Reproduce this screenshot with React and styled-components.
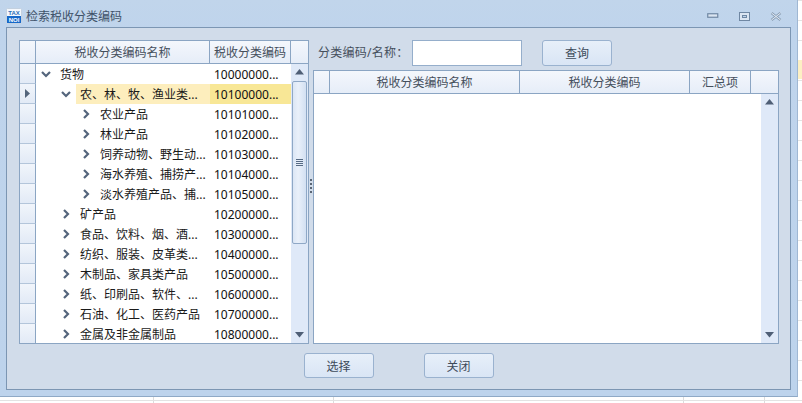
import React from 'react';
import styled, { createGlobalStyle } from 'styled-components';

const GlobalStyle = createGlobalStyle`
    html, body {
        margin: 0;
        padding: 0;
        overflow: hidden;
    }
    body {
        font-family: "Noto Sans", "Noto Sans CJK SC", sans-serif;
        font-size: 12px;
    }
`;

const Sheet = styled.div`
    width: 802px;
    height: 403px;
    overflow: hidden;
    background-color: #fff;
    background-image:
        linear-gradient(#fdf0c4, #fdf0c4),
        repeating-linear-gradient(to bottom, #e3e3e3 0, #e3e3e3 1px, transparent 1px, transparent 20px),
        linear-gradient(to right, #dcdcdc, #dcdcdc),
        linear-gradient(to right, #dcdcdc, #dcdcdc),
        linear-gradient(to right, #dcdcdc, #dcdcdc),
        linear-gradient(to right, #dcdcdc, #dcdcdc);
    background-size: 4px 19px, 100% 20px, 1px 7px, 1px 7px, 1px 7px, 1px 7px;
    background-position: 798px 60px, 0 0, 153px 396px, 333px 396px, 683px 396px, 764px 396px;
    background-repeat: no-repeat, repeat, no-repeat, no-repeat, no-repeat, no-repeat;
`;

const Window = styled.div`
    box-sizing: border-box;
    width: 798px;
    height: 397px;
    display: flex;
    flex-direction: column;
    padding: 0 6px 6px;
    background: linear-gradient(to bottom, #c1d5eb 0, #bfd4ec 30px, #bdd3ec 100%);
    border-right: 1px solid #9fb7d3;
    border-bottom: 1px solid #8fa9c6;
`;

const TitleBar = styled.div`
    height: 27px;
    flex: none;
    display: flex;
    align-items: center;
    padding-top: 5px;
    box-sizing: border-box;
`;

const TitleText = styled.span`
    margin-left: 4px;
    color: #3f5269;
    font-size: 12px;
`;

const WindowButtons = styled.div`
    margin-left: auto;
    display: flex;
    align-items: center;
    gap: 20px;
    margin-right: 9px;
`;

const Panel = styled.div`
    flex: 1;
    box-sizing: border-box;
    display: flex;
    flex-direction: column;
    padding: 12px 12px 0;
    background: #d1dcea;
    border: 1px solid #7c96b3;
`;

const Main = styled.div`
    height: 304px;
    flex: none;
    display: flex;
`;

const Grid = styled.div`
    box-sizing: border-box;
    display: flex;
    flex-direction: column;
    overflow: hidden;
    background: #fff;
    border: 1px solid #8ba5c3;
    width: ${p => p.$width}px;
    height: ${p => p.$height}px;
`;

const HeaderRow = styled.div`
    flex: none;
    height: 23px;
    box-sizing: border-box;
    display: flex;
    border-bottom: 1px solid #8ba5c3;
    background: linear-gradient(to bottom, #f4f7fc, #e6edf8);
`;

const HeaderCell = styled.div`
    box-sizing: border-box;
    width: ${p => p.$width}px;
    flex: ${p => (p.$width ? 'none' : 1)};
    display: flex;
    align-items: center;
    justify-content: center;
    color: #454f5c;
    white-space: nowrap;
    border-right: ${p => (p.$last ? 'none' : '1px solid #8ba5c3')};
`;

const GridBody = styled.div`
    flex: 1;
    min-height: 0;
    display: flex;
`;

const Rows = styled.div`
    flex: 1;
    min-width: 0;
    overflow: hidden;
`;

const Row = styled.div`
    height: 20px;
    display: flex;
`;

const Indicator = styled.div`
    box-sizing: border-box;
    width: 16px;
    flex: none;
    display: flex;
    align-items: center;
    justify-content: center;
    border-right: 1px solid #8ba5c3;
    border-bottom: 1px solid #b3c5da;
    background: linear-gradient(to bottom, #f1f5fb, #e2eaf6);
`;

const NameCell = styled.div`
    width: 174px;
    flex: none;
    box-sizing: border-box;
    display: flex;
    align-items: center;
    padding-left: ${p => 3 + p.$level * 20}px;
    white-space: nowrap;
    color: #1a1a1a;
`;

const Expander = styled.span`
    width: 14px;
    height: 20px;
    flex: none;
    display: flex;
    align-items: center;
    justify-content: center;
`;

const NameText = styled.span`
    height: 20px;
    line-height: 22px;
    flex: 1;
    margin-left: 3px;
    padding-left: 4px;
    background: ${p => (p.$selected ? '#fdeebd' : 'transparent')};
`;

const CodeCell = styled.div`
    width: 81px;
    height: 20px;
    flex: none;
    box-sizing: border-box;
    line-height: 22px;
    padding-left: 4px;
    white-space: nowrap;
    color: #111;
    background: ${p => (p.$selected ? '#f8e796' : 'transparent')};
`;

const ScrollBar = styled.div`
    width: 17px;
    flex: none;
    display: flex;
    flex-direction: column;
    align-items: center;
    background: #dfe9f8;
`;

const ArrowBox = styled.div`
    height: 16px;
    flex: none;
    display: flex;
    align-items: center;
    justify-content: center;
    margin-top: ${p => (p.$bottom ? 'auto' : '0')};
`;

const Thumb = styled.div`
    box-sizing: border-box;
    width: 15px;
    height: 163px;
    margin-top: 1px;
    display: flex;
    align-items: center;
    justify-content: center;
    border: 1px solid #8fa8c6;
    border-radius: 2px;
    background: linear-gradient(to right, #dbe6f5, #e9f0fa 40%, #d3e0f2);
`;

const Grip = styled.div`
    width: 7px;
    height: 7px;
    background: repeating-linear-gradient(to bottom, #566a84 0, #566a84 1px, transparent 1px, transparent 2px);
`;

const Splitter = styled.div`
    width: 4px;
    flex: none;
    display: flex;
    flex-direction: column;
    align-items: center;
    justify-content: center;
    gap: 2px;
    padding-bottom: 13px;
    box-sizing: border-box;
`;

const Dot = styled.i`
    display: block;
    width: 2px;
    height: 2px;
    background: #5a6675;
`;

const RightSide = styled.div`
    flex: 1;
    min-width: 0;
    display: flex;
    flex-direction: column;
`;

const SearchBar = styled.div`
    height: 30px;
    flex: none;
    display: flex;
    align-items: flex-start;
`;

const SearchLabel = styled.label`
    width: 94px;
    margin-left: 5px;
    flex: none;
    height: 26px;
    line-height: 26px;
    letter-spacing: 0.25px;
    color: #454f5c;
    white-space: nowrap;
`;

const SearchInput = styled.input`
    box-sizing: border-box;
    width: 110px;
    height: 26px;
    padding: 0 4px;
    background: #fff;
    border: 1px solid #95aecb;
    outline: none;
`;

const Button = styled.button`
    box-sizing: border-box;
    width: 70px;
    height: ${p => p.$height || 25}px;
    padding: 0;
    margin-left: ${p => p.$offset || 0}px;
    font: inherit;
    color: #3d4a5a;
    border: 1px solid #9ab2cf;
    border-radius: 3px;
    background: linear-gradient(to bottom, #e7eff9, #d9e5f5);
`;

const Footer = styled.div`
    flex: none;
    display: flex;
    justify-content: center;
    gap: 50px;
    margin-top: 9px;
`;

const EmptyBody = styled.div`
    flex: 1;
`;

function Chevron({ open }) {
    return (
        <svg width="10" height="10" viewBox="0 0 10 10">
            <path
                d={open ? 'M1 3 L5 7 L9 3' : 'M3 1 L7 5 L3 9'}
                fill="none"
                stroke="#54657c"
                strokeWidth="2.2"
            />
        </svg>
    );
}

function Arrow({ down }) {
    return (
        <svg width="9" height="6" viewBox="0 0 9 6">
            <path d={down ? 'M0 0 H9 L4.5 5.5 Z' : 'M0 5.5 H9 L4.5 0 Z'} fill="#4f5f76" />
        </svg>
    );
}

function RowMarker() {
    return (
        <svg width="5" height="9" viewBox="0 0 5 9">
            <path d="M0 0 L5 4.5 L0 9 Z" fill="#54657c" />
        </svg>
    );
}

function TaxIcon() {
    return (
        <svg width="16" height="16" viewBox="0 0 16 16">
            <rect x="0.5" y="0.5" width="15" height="15" rx="1" fill="#f4f8fd" stroke="#c3d0df" />
            <rect x="1" y="8" width="14" height="7" fill="#1668c9" />
            <text x="8" y="6.6" textAnchor="middle" fontSize="6" fontWeight="700" fill="#2a6bb8" fontFamily="Liberation Sans">TAX</text>
            <text x="8" y="14" textAnchor="middle" fontSize="6" fontWeight="700" fill="#fff" fontFamily="Liberation Sans">NOI</text>
        </svg>
    );
}

function MinimizeIcon() {
    return (
        <svg width="12" height="6" viewBox="0 0 12 6">
            <rect x="0.75" y="0.75" width="10" height="3.5" fill="#dbe5f1" stroke="#6f87a3" strokeWidth="1.2" />
        </svg>
    );
}

function RestoreIcon() {
    return (
        <svg width="11" height="9" viewBox="0 0 11 9">
            <rect x="0.5" y="0.5" width="10" height="8" fill="#dbe5f1" stroke="#6f87a3" />
            <rect x="3.5" y="3.5" width="4" height="2" fill="#bed3ea" stroke="#6f87a3" />
        </svg>
    );
}

function CloseIcon() {
    return (
        <svg width="12" height="9" viewBox="0 0 12 9">
            <path d="M1.5 1 L10.5 8 M10.5 1 L1.5 8" stroke="#8ba0b8" strokeWidth="2.6" fill="none" />
            <path d="M1.5 1 L10.5 8 M10.5 1 L1.5 8" stroke="#e2e9f2" strokeWidth="1" fill="none" />
        </svg>
    );
}

const treeRows = [
    { level: 0, open: true, name: '货物', code: '10000000...' },
    { level: 1, open: true, name: '农、林、牧、渔业类...', code: '10100000...', selected: true },
    { level: 2, name: '农业产品', code: '10101000...' },
    { level: 2, name: '林业产品', code: '10102000...' },
    { level: 2, name: '饲养动物、野生动...', code: '10103000...' },
    { level: 2, name: '海水养殖、捕捞产...', code: '10104000...' },
    { level: 2, name: '淡水养殖产品、捕...', code: '10105000...' },
    { level: 1, name: '矿产品', code: '10200000...' },
    { level: 1, name: '食品、饮料、烟、酒...', code: '10300000...' },
    { level: 1, name: '纺织、服装、皮革类...', code: '10400000...' },
    { level: 1, name: '木制品、家具类产品', code: '10500000...' },
    { level: 1, name: '纸、印刷品、软件、...', code: '10600000...' },
    { level: 1, name: '石油、化工、医药产品', code: '10700000...' },
    { level: 1, name: '金属及非金属制品', code: '10800000...' },
];

function App() {
    return (
        <Sheet>
            <GlobalStyle />
            <Window>
                <TitleBar>
                    <TaxIcon />
                    <TitleText>检索税收分类编码</TitleText>
                    <WindowButtons>
                        <MinimizeIcon />
                        <RestoreIcon />
                        <CloseIcon />
                    </WindowButtons>
                </TitleBar>
                <Panel>
                    <Main>
                        <Grid $width={290} $height={304}>
                            <HeaderRow>
                                <HeaderCell $width={16} />
                                <HeaderCell $width={174}>税收分类编码名称</HeaderCell>
                                <HeaderCell $width={81}>税收分类编码</HeaderCell>
                                <HeaderCell $last />
                            </HeaderRow>
                            <GridBody>
                                <Rows>
                                    {treeRows.map(row => (
                                        <Row key={row.code}>
                                            <Indicator>{row.selected && <RowMarker />}</Indicator>
                                            <NameCell $level={row.level}>
                                                <Expander><Chevron open={row.open} /></Expander>
                                                <NameText $selected={row.selected}>{row.name}</NameText>
                                            </NameCell>
                                            <CodeCell $selected={row.selected}>{row.code}</CodeCell>
                                        </Row>
                                    ))}
                                </Rows>
                                <ScrollBar>
                                    <ArrowBox><Arrow /></ArrowBox>
                                    <Thumb><Grip /></Thumb>
                                    <ArrowBox $bottom><Arrow down /></ArrowBox>
                                </ScrollBar>
                            </GridBody>
                        </Grid>
                        <Splitter>
                            <Dot /><Dot /><Dot /><Dot />
                        </Splitter>
                        <RightSide>
                            <SearchBar>
                                <SearchLabel>分类编码/名称：</SearchLabel>
                                <SearchInput />
                                <Button $offset={20} $height={26}>查询</Button>
                            </SearchBar>
                            <Grid $width={466} $height={274}>
                                <HeaderRow>
                                    <HeaderCell $width={16} />
                                    <HeaderCell $width={190}>税收分类编码名称</HeaderCell>
                                    <HeaderCell $width={170}>税收分类编码</HeaderCell>
                                    <HeaderCell $width={61}>汇总项</HeaderCell>
                                    <HeaderCell $last />
                                </HeaderRow>
                                <GridBody>
                                    <EmptyBody />
                                    <ScrollBar>
                                        <ArrowBox><Arrow /></ArrowBox>
                                        <ArrowBox $bottom><Arrow down /></ArrowBox>
                                    </ScrollBar>
                                </GridBody>
                            </Grid>
                        </RightSide>
                    </Main>
                    <Footer>
                        <Button>选择</Button>
                        <Button>关闭</Button>
                    </Footer>
                </Panel>
            </Window>
        </Sheet>
    );
}

export default App;
